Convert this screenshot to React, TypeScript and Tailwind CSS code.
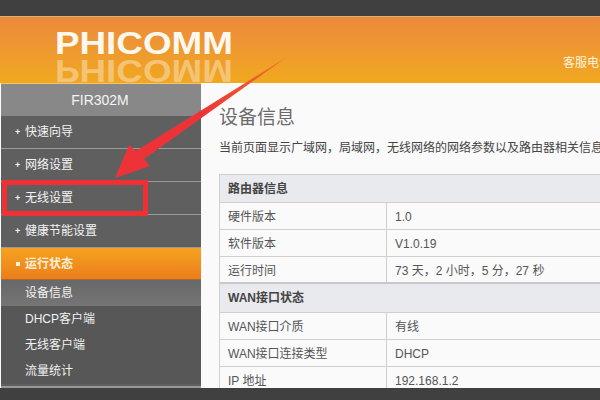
const font = "font-['Liberation_Sans','Noto_Sans_CJK_SC',sans-serif]";

const menu = ['快速向导', '网络设置', '无线设置', '健康节能设置'];
const subMenu = ['DHCP客户端', '无线客户端', '流量统计'];

function Row({ label, value, thick }: { label: string; value: string; thick?: boolean }) {
  return (
    <div className={thick ? 'flex h-[27px] border-b-2 border-[#c8c8cc] text-[12px] text-[#555]' : 'flex h-[27px] border-b border-[#cfcfcf] text-[12px] text-[#555]'}>
      <div className="w-[167px] shrink-0 border-r border-[#cfcfcf] pl-[8px] leading-[28px]">{label}</div>
      <div className="pl-[8px] leading-[28px]">{value}</div>
    </div>
  );
}

function SectionHead({ title, tall }: { title: string; tall?: boolean }) {
  return (
    <div className={tall ? 'h-[29px] border-b border-[#cfcfcf] bg-[#e9eaee] pl-[8px] text-[12px] leading-[29px] font-bold text-[#444]' : 'h-[28px] border-b border-[#cfcfcf] bg-[#e9eaee] pl-[8px] text-[12px] leading-[29px] font-bold text-[#444]'}>
      {title}
    </div>
  );
}

export default function App() {
  return (
    <div className={`relative flex h-[400px] w-[600px] flex-col overflow-hidden bg-[#404040] ${font}`}>
      <div className="h-[17px] shrink-0 border-b border-[#e0b070]" />

      {/* header */}
      <div className="flex h-[66px] shrink-0 overflow-hidden bg-gradient-to-b from-[#ec8a3c] to-[#f0a81c] pt-[8px] pl-[55px]">
        <div className="w-[180px] shrink-0 [font-family:'Liberation_Sans',sans-serif] text-[32px] leading-[36px] font-bold">
          <div className="origin-left scale-x-[1.15] text-[#fdf8ee]">PHICOMM</div>
          <div className="mt-[-8px] origin-left scale-x-[1.15] -scale-y-100 text-[#f5c374]">PHICOMM</div>
        </div>
        <div className="mt-[30px] ml-auto w-[37px] overflow-hidden text-[12px] leading-[16px] whitespace-nowrap text-[#fdf3dc]">客服电话</div>
      </div>

      <div className="flex h-[305px] shrink-0 bg-[#fafafa]">
        {/* sidebar */}
        <div className="ml-[1px] w-[200px] shrink-0 border-b-2 border-[#999] bg-[#5f5f5f]">
          <div className="h-[33px] border-t border-[#f3c27c] bg-[#888888] pr-[2px] text-center text-[14px] leading-[32px] text-[#f4f4f4]">FIR302M</div>
          {menu.map(item => (
            <div key={item} className="flex h-[33px] items-center border-b border-[#9a9a9a] pl-[14px] text-[12px] text-[#f4f4f4]">
              <span className="w-[10px] text-[9px] leading-none font-bold">+</span>
              {item}
            </div>
          ))}
          <div className="flex h-[32px] items-center gap-[5px] border-b border-[#a86a20] bg-gradient-to-b from-[#f4a31f] to-[#ec7d1c] pl-[15px] text-[12px] font-bold text-[#fdeed8]">
            <span className="h-[4px] w-[4px] bg-[#fdf3dc]" />
            运行状态
          </div>
          <div className="h-[26px] bg-gradient-to-b from-[#68686a] to-[#757575] pl-[24px] text-[12px] leading-[26px] text-[#f2f2f2]">设备信息</div>
          {subMenu.map(item => (
            <div key={item} className="h-[26px] bg-[#575757] pl-[24px] text-[12px] leading-[26px] text-[#f2f2f2]">{item}</div>
          ))}
        </div>

        {/* content */}
        <div className="min-w-0 flex-1 overflow-hidden pt-[22px] pl-[18px]">
          <h1 className="text-[19px] leading-[26px] text-[#6b6b6b]">设备信息</h1>
          <p className="mt-[9px] text-[12px] leading-[16px] whitespace-nowrap text-[#444]">
            当前页面显示广域网，局域网，无线网络的网络参数以及路由器相关信息
          </p>
          <div className="mt-[18px] w-[420px] border-t border-l border-[#cfcfcf]">
            <SectionHead title="路由器信息" />
            <Row label="硬件版本" value="1.0" />
            <Row label="软件版本" value="V1.0.19" />
            <Row label="运行时间" value="73 天，2 小时，5 分，27 秒" thick />
            <SectionHead title="WAN接口状态" tall />
            <Row label="WAN接口介质" value="有线" />
            <Row label="WAN接口连接类型" value="DHCP" />
            <Row label="IP 地址" value="192.168.1.2" />
          </div>
        </div>
      </div>

      <div className="flex-1 bg-[#404040]" />

      {/* red annotation */}
      <div className="absolute top-[180px] left-[2px] h-[36px] w-[146px] border-[5px] border-[#f03035]" />
      <svg className="absolute top-0 left-0" width="600" height="400" viewBox="0 0 600 400">
        <defs>
          <linearGradient id="arrowFill" x1="287" y1="57" x2="200" y2="115" gradientUnits="userSpaceOnUse">
            <stop offset="0" stopColor="#e8742a" />
            <stop offset="1" stopColor="#ee3338" />
          </linearGradient>
        </defs>
        <path d="M287 57 L136 151 L129 145 L115 178 L150 166 L144 159 Z" fill="url(#arrowFill)" />
      </svg>
    </div>
  );
}
